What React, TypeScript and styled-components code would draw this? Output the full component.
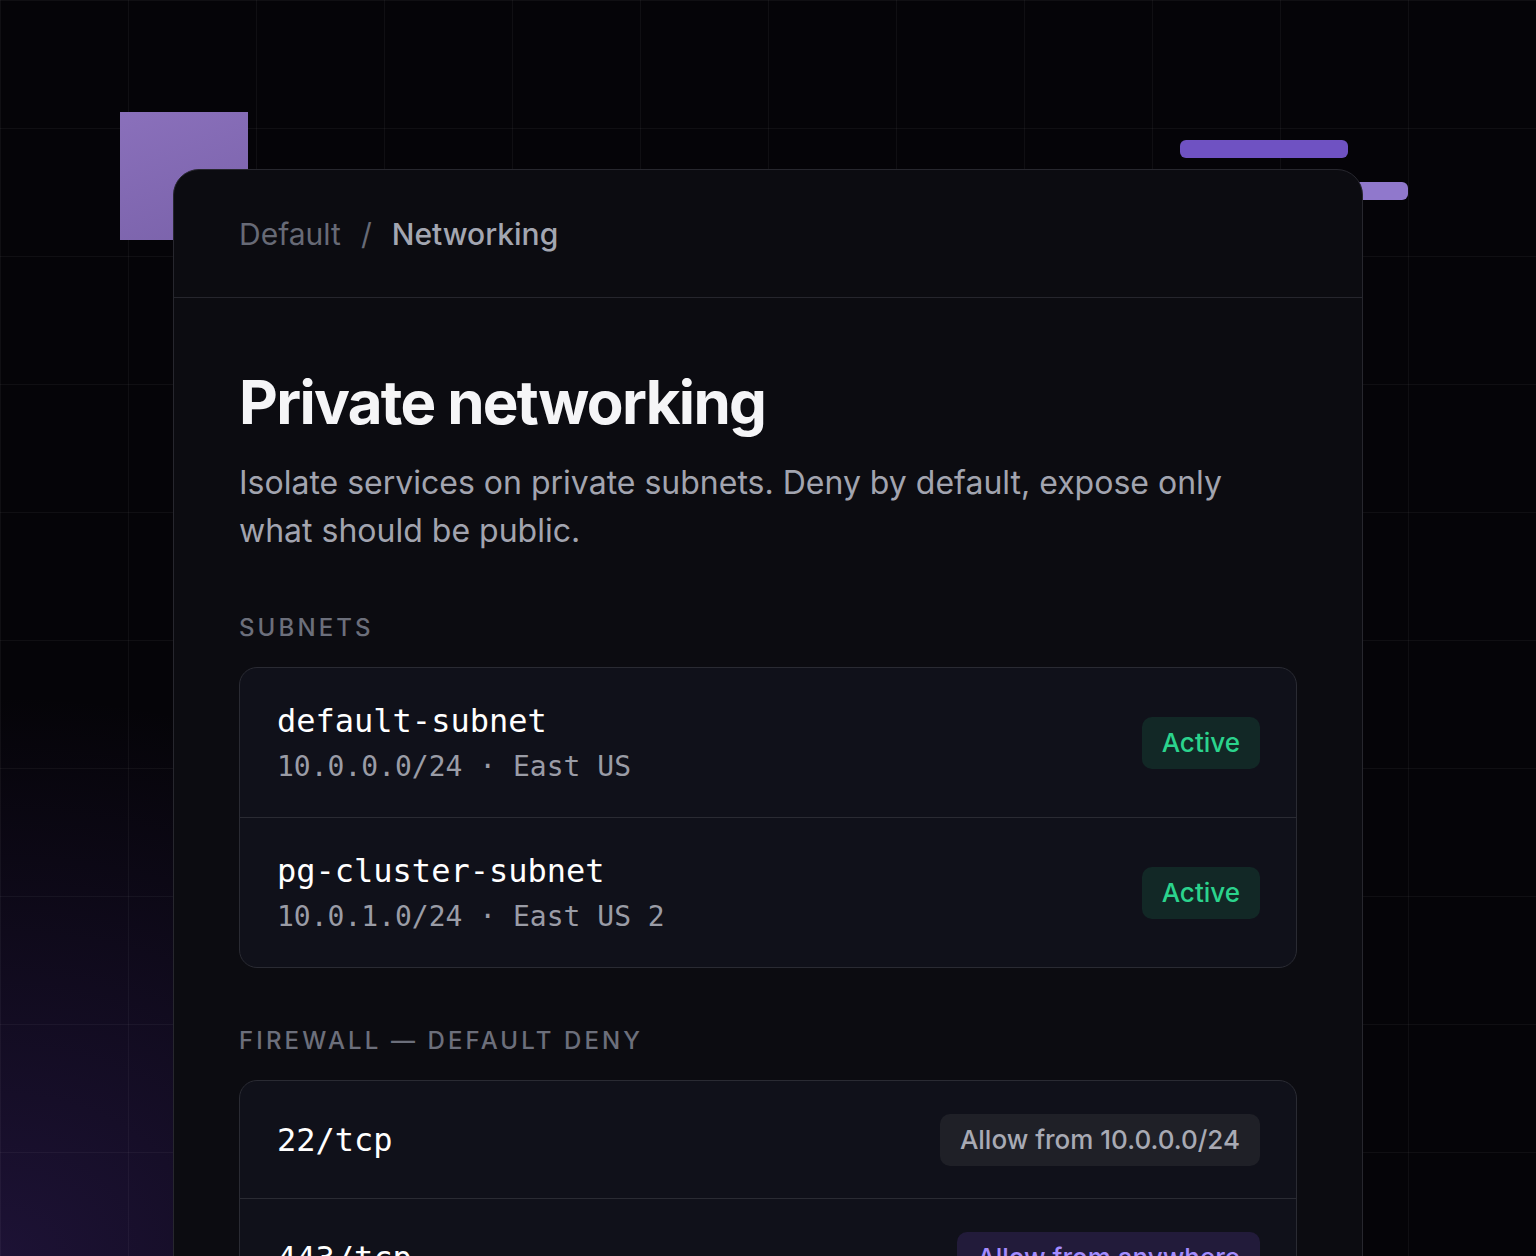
import styled, { createGlobalStyle } from "styled-components";

const GlobalStyle = createGlobalStyle`
    html, body {
        margin:0;
        padding:0;
        background:#050408;
    }
    body {
        font-family:Inter, "Noto Sans", sans-serif;
        overflow:hidden;
    }
`;

const Page = styled.div`
    position:relative;
    width:1536px;
    height:1256px;
    overflow:hidden;
    background:
        linear-gradient(rgba(255,255,255,0.045) 1px, transparent 1px) 0 0 / 128px 128px,
        linear-gradient(90deg, rgba(255,255,255,0.045) 1px, transparent 1px) 0 0 / 128px 128px,
        radial-gradient(ellipse 1000px 800px at 0% 100%, rgba(75,45,140,0.34), transparent 70%),
        #050408;
    padding-top:169px;
    box-sizing:border-box;
`;

const Square = styled.div`
    position:absolute;
    left:120px;
    top:112px;
    width:128px;
    height:128px;
    background:linear-gradient(160deg, #8a70bb, #7a62aa);
`;

const Bar = styled.div<{ $left: number; $top: number; $width: number; $color: string }>`
    position:absolute;
    left:${p => p.$left}px;
    top:${p => p.$top}px;
    width:${p => p.$width}px;
    height:18px;
    border-radius:6px;
    background:${p => p.$color};
`;

const Card = styled.main`
    position:relative;
    width:1190px;
    margin:0 auto;
    min-height:1200px;
    box-sizing:border-box;
    background:#0c0c11;
    border:1px solid #27272e;
    border-radius:26px;
`;

const Header = styled.header`
    height:127px;
    display:flex;
    align-items:center;
    gap:20px;
    padding:0 65px;
    border-bottom:1px solid #26262d;
    font-size:30px;
`;

const Crumb = styled.span<{ $current?: boolean }>`
    color:${p => p.$current ? "#a3a6b1" : "#676a76"};
    font-weight:${p => p.$current ? 500 : 400};
`;

const Body = styled.section`
    padding:68px 65px 0;
`;

const Title = styled.h1`
    margin:0;
    font-size:60px;
    font-weight:700;
    letter-spacing:-0.028em;
    line-height:72px;
    color:#f5f5f7;
`;

const Lead = styled.p`
    margin:21px 0 0;
    font-size:32px;
    line-height:48px;
    color:#a2a4af;
    max-width:1020px;
`;

const Label = styled.h2`
    margin:58px 0 24px;
    font-size:24px;
    font-weight:500;
    letter-spacing:0.13em;
    text-transform:uppercase;
    color:#6c6f7b;
    line-height:30px;
`;

const List = styled.div`
    border:1px solid #2a2b33;
    border-radius:18px;
    background:#10111a;
    overflow:hidden;
`;

const Row = styled.div<{ $height: number }>`
    height:${p => p.$height}px;
    display:flex;
    align-items:center;
    justify-content:space-between;
    padding:0 36px 0 37px;
    border-top:1px solid #2a2b33;
    &:first-child { border-top:none; }
`;

const Info = styled.div`
    display:flex;
    flex-direction:column;
    gap:8px;
    font-family:"DejaVu Sans Mono", "Liberation Mono", monospace;
`;

const Name = styled.div`
    font-size:32px;
    line-height:40px;
    color:#ffffff;
`;

const Meta = styled.div`
    font-size:28px;
    line-height:36px;
    color:#9a9ca6;
`;

const Badge = styled.span<{ $tone: "green" | "grey" | "purple" }>`
    display:inline-flex;
    align-items:center;
    height:52px;
    padding:0 20px;
    border-radius:10px;
    font-size:26px;
    font-weight:500;
    background:${p => p.$tone === "green" ? "#122826" : p.$tone === "purple" ? "#221b3a" : "#1f2027"};
    color:${p => p.$tone === "green" ? "#2bd38d" : p.$tone === "purple" ? "#a48cff" : "#a8aab4"};
`;

const subnets = [
    { name: "default-subnet", meta: "10.0.0.0/24 · East US" },
    { name: "pg-cluster-subnet", meta: "10.0.1.0/24 · East US 2" },
];

const rules = [
    { port: "22/tcp", rule: "Allow from 10.0.0.0/24", tone: "grey" as const },
    { port: "443/tcp", rule: "Allow from anywhere", tone: "purple" as const },
];

function App() {
    return (
        <Page>
            <GlobalStyle />
            <Square />
            <Bar $left={1180} $top={140} $width={168} $color="#6f52c2" />
            <Bar $left={1300} $top={182} $width={108} $color="#9078cc" />
            <Card>
                <Header>
                    <Crumb>Default</Crumb>
                    <Crumb>/</Crumb>
                    <Crumb $current>Networking</Crumb>
                </Header>
                <Body>
                    <Title>Private networking</Title>
                    <Lead>Isolate services on private subnets. Deny by default, expose only what should be public.</Lead>
                    <Label>Subnets</Label>
                    <List>
                        {subnets.map(s => (
                            <Row key={s.name} $height={149}>
                                <Info>
                                    <Name>{s.name}</Name>
                                    <Meta>{s.meta}</Meta>
                                </Info>
                                <Badge $tone="green">Active</Badge>
                            </Row>
                        ))}
                    </List>
                    <Label>Firewall — default deny</Label>
                    <List>
                        {rules.map(r => (
                            <Row key={r.port} $height={117}>
                                <Info>
                                    <Name>{r.port}</Name>
                                </Info>
                                <Badge $tone={r.tone}>{r.rule}</Badge>
                            </Row>
                        ))}
                    </List>
                </Body>
            </Card>
        </Page>
    );
}

export default App;
